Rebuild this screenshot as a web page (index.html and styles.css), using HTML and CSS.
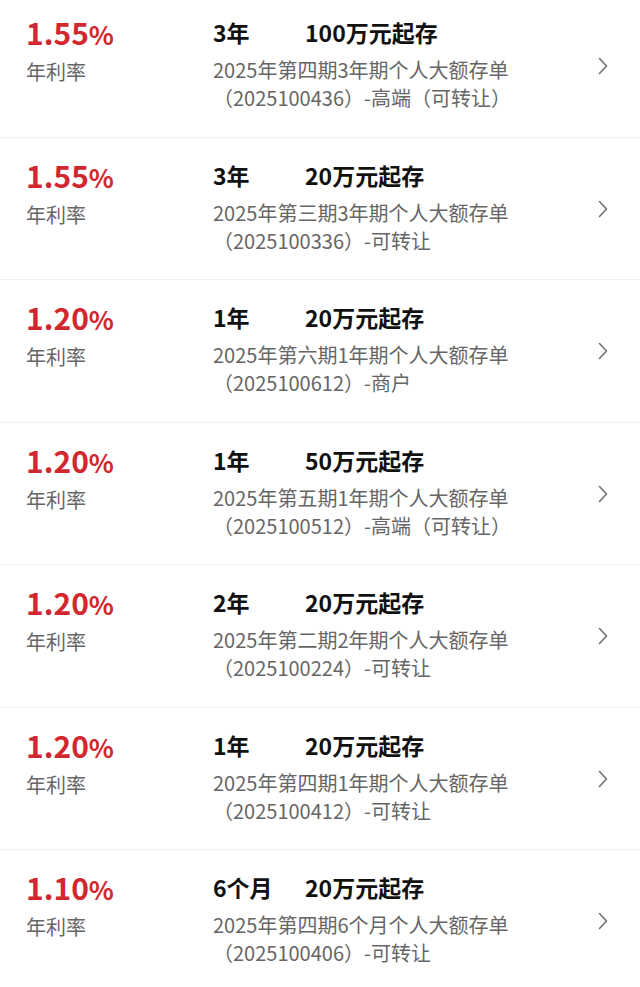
FILE: index.html
```html
<!DOCTYPE html>
<html lang="zh-CN">
<head>
<meta charset="utf-8">
<title>大额存单</title>
<link rel="stylesheet" href="styles.css">
</head>
<body>
<ul class="list">
  <li class="item">
    <div class="rate-col"><div class="rate">1.55<span class="pct">%</span></div><div class="label">年利率</div></div>
    <div class="info"><div class="head"><span class="term">3年</span><span class="min">100万元起存</span></div><div class="desc">2025年第四期3年期个人大额存单<br>（2025100436）-高端（可转让）</div></div>
    <svg class="chev" width="10" height="18" viewBox="0 0 10 18"><polyline points="1.5,1.5 8.5,9 1.5,16.5" fill="none" stroke="#707070" stroke-width="1.6" stroke-linecap="round" stroke-linejoin="round"/></svg>
  </li>
  <li class="item">
    <div class="rate-col"><div class="rate">1.55<span class="pct">%</span></div><div class="label">年利率</div></div>
    <div class="info"><div class="head"><span class="term">3年</span><span class="min">20万元起存</span></div><div class="desc">2025年第三期3年期个人大额存单<br>（2025100336）-可转让</div></div>
    <svg class="chev" width="10" height="18" viewBox="0 0 10 18"><polyline points="1.5,1.5 8.5,9 1.5,16.5" fill="none" stroke="#707070" stroke-width="1.6" stroke-linecap="round" stroke-linejoin="round"/></svg>
  </li>
  <li class="item">
    <div class="rate-col"><div class="rate">1.20<span class="pct">%</span></div><div class="label">年利率</div></div>
    <div class="info"><div class="head"><span class="term">1年</span><span class="min">20万元起存</span></div><div class="desc">2025年第六期1年期个人大额存单<br>（2025100612）-商户</div></div>
    <svg class="chev" width="10" height="18" viewBox="0 0 10 18"><polyline points="1.5,1.5 8.5,9 1.5,16.5" fill="none" stroke="#707070" stroke-width="1.6" stroke-linecap="round" stroke-linejoin="round"/></svg>
  </li>
  <li class="item">
    <div class="rate-col"><div class="rate">1.20<span class="pct">%</span></div><div class="label">年利率</div></div>
    <div class="info"><div class="head"><span class="term">1年</span><span class="min">50万元起存</span></div><div class="desc">2025年第五期1年期个人大额存单<br>（2025100512）-高端（可转让）</div></div>
    <svg class="chev" width="10" height="18" viewBox="0 0 10 18"><polyline points="1.5,1.5 8.5,9 1.5,16.5" fill="none" stroke="#707070" stroke-width="1.6" stroke-linecap="round" stroke-linejoin="round"/></svg>
  </li>
  <li class="item">
    <div class="rate-col"><div class="rate">1.20<span class="pct">%</span></div><div class="label">年利率</div></div>
    <div class="info"><div class="head"><span class="term">2年</span><span class="min">20万元起存</span></div><div class="desc">2025年第二期2年期个人大额存单<br>（2025100224）-可转让</div></div>
    <svg class="chev" width="10" height="18" viewBox="0 0 10 18"><polyline points="1.5,1.5 8.5,9 1.5,16.5" fill="none" stroke="#707070" stroke-width="1.6" stroke-linecap="round" stroke-linejoin="round"/></svg>
  </li>
  <li class="item">
    <div class="rate-col"><div class="rate">1.20<span class="pct">%</span></div><div class="label">年利率</div></div>
    <div class="info"><div class="head"><span class="term">1年</span><span class="min">20万元起存</span></div><div class="desc">2025年第四期1年期个人大额存单<br>（2025100412）-可转让</div></div>
    <svg class="chev" width="10" height="18" viewBox="0 0 10 18"><polyline points="1.5,1.5 8.5,9 1.5,16.5" fill="none" stroke="#707070" stroke-width="1.6" stroke-linecap="round" stroke-linejoin="round"/></svg>
  </li>
  <li class="item">
    <div class="rate-col"><div class="rate">1.10<span class="pct">%</span></div><div class="label">年利率</div></div>
    <div class="info"><div class="head"><span class="term">6个月</span><span class="min">20万元起存</span></div><div class="desc">2025年第四期6个月个人大额存单<br>（2025100406）-可转让</div></div>
    <svg class="chev" width="10" height="18" viewBox="0 0 10 18"><polyline points="1.5,1.5 8.5,9 1.5,16.5" fill="none" stroke="#707070" stroke-width="1.6" stroke-linecap="round" stroke-linejoin="round"/></svg>
  </li>
</ul>
</body>
</html>
```
FILE: styles.css
```css
html, body {
  margin: 0;
  padding: 0;
  background: #ffffff;
}
body {
  font-family: "Noto Sans CJK SC", "Noto Sans", sans-serif;
  overflow: hidden;
}
.list {
  list-style: none;
  margin: -5px 0 0 0;
  padding: 0;
}
.item {
  box-sizing: border-box;
  height: 142.5px;
  display: flex;
  align-items: flex-start;
  padding: 19px 0 0 26px;
  border-bottom: 1px solid #efefef;
}
.rate-col {
  width: 187px;
  flex: none;
}
.rate {
  font-size: 30px;
  line-height: 36px;
  font-weight: 700;
  color: #d0282e;
}
.pct {
  font-size: 26px;
}
.label {
  margin-top: 6px;
  font-size: 20px;
  line-height: 28px;
  color: #666666;
}
.info {
  flex: 1;
}
.head {
  display: flex;
  font-size: 23px;
  line-height: 36px;
  font-weight: 700;
  color: #111111;
}
.term {
  width: 92px;
  flex: none;
}
.desc {
  margin-top: 6px;
  font-size: 20px;
  line-height: 28px;
  color: #666666;
}
.chev {
  flex: none;
  margin: 43px 32px 0 0;
}
```
